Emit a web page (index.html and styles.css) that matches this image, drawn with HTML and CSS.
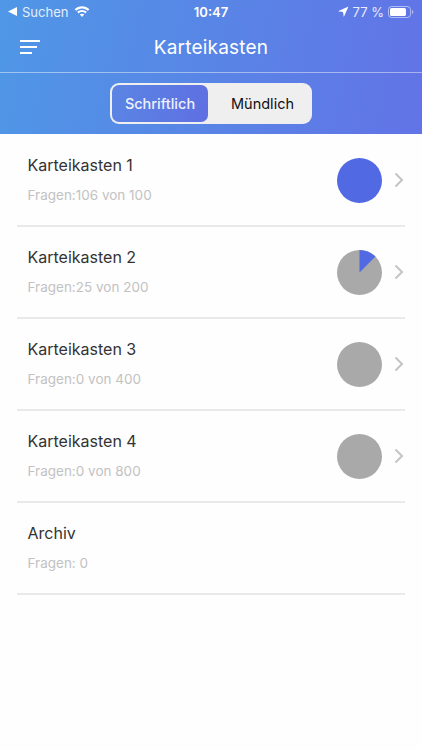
FILE: index.html
```html
<!DOCTYPE html>
<html lang="de">
<head>
<meta charset="utf-8">
<title>Karteikasten</title>
<link rel="stylesheet" href="styles.css">
</head>
<body>
<header class="header">
  <div class="status">
    <div class="status-left">
      <svg class="back-tri" viewBox="0 0 9 9"><path d="M0 4.500 9 0v9z"/></svg>
      <span>Suchen</span>
      <svg class="wifi" viewBox="0 0 16 12"><path d="M8 2.400c2.300 0 4.400.9 5.900 2.400l1.500-1.600C13.500 1.300 10.900.2 8 .2S2.500 1.300.6 3.200l1.500 1.600C3.600 3.300 5.700 2.400 8 2.400z"/><path d="M8 6.100c1.300 0 2.400.5 3.300 1.300l1.500-1.600C11.500 4.600 9.800 3.900 8 3.900s-3.500.7-4.800 1.900l1.500 1.600c.9-.8 2-1.300 3.300-1.300z"/><path d="M8 7.700c-.8 0-1.600.3-2.200.9L8 11l2.200-2.400c-.6-.6-1.400-.9-2.200-.9z"/></svg>
    </div>
    <div class="status-time">10:47</div>
    <div class="status-right">
      <svg class="loc" viewBox="0 0 11 11"><path d="M10.500.5 0 5.200l5 .7.800 5z"/></svg>
      <span>77 %</span>
      <svg class="battery" viewBox="0 0 26 12"><rect x=".5" y=".5" width="22" height="11" rx="3" fill="none" stroke="#fff" stroke-opacity=".5"/><rect x="2" y="2" width="16" height="8" rx="1.600" fill="#fff"/><path d="M24 4v4c.8-.3 1.300-1.100 1.300-2S24.800 4.300 24 4z" fill="#fff" fill-opacity=".5"/></svg>
    </div>
  </div>
  <nav class="nav">
    <svg class="menu" viewBox="0 0 20 14"><path d="M0 1h20M0 7h17M0 13h12" fill="none" stroke="#fff" stroke-width="2"/></svg>
    <h1 class="title">Karteikasten</h1>
  </nav>
  <div class="seg-wrap">
    <div class="seg">
      <div class="seg-btn seg-on">Schriftlich</div>
      <div class="seg-btn">Mündlich</div>
    </div>
  </div>
</header>
<main class="list">
  <div class="row">
    <div class="text"><div class="name">Karteikasten 1</div><div class="sub">Fragen:106 von 100</div></div>
    <svg class="pie" viewBox="0 0 46 46"><circle cx="23" cy="23" r="23" fill="#5169e3"/></svg>
    <svg class="chev" viewBox="0 0 10 16"><path d="M1.500 1.500 8 8l-6.500 6.500" fill="none" stroke="#c4c4c6" stroke-width="2"/></svg>
  </div>
  <div class="row">
    <div class="text"><div class="name">Karteikasten 2</div><div class="sub">Fragen:25 von 200</div></div>
    <svg class="pie" viewBox="0 0 46 46"><circle cx="23" cy="23" r="23" fill="#a9a9a9"/><path d="M23 23V0a23 23 0 0 1 16.300 6.700z" fill="#5169e3"/></svg>
    <svg class="chev" viewBox="0 0 10 16"><path d="M1.500 1.500 8 8l-6.500 6.500" fill="none" stroke="#c4c4c6" stroke-width="2"/></svg>
  </div>
  <div class="row">
    <div class="text"><div class="name">Karteikasten 3</div><div class="sub">Fragen:0 von 400</div></div>
    <svg class="pie" viewBox="0 0 46 46"><circle cx="23" cy="23" r="23" fill="#a9a9a9"/></svg>
    <svg class="chev" viewBox="0 0 10 16"><path d="M1.500 1.500 8 8l-6.500 6.500" fill="none" stroke="#c4c4c6" stroke-width="2"/></svg>
  </div>
  <div class="row">
    <div class="text"><div class="name">Karteikasten 4</div><div class="sub">Fragen:0 von 800</div></div>
    <svg class="pie" viewBox="0 0 46 46"><circle cx="23" cy="23" r="23" fill="#a9a9a9"/></svg>
    <svg class="chev" viewBox="0 0 10 16"><path d="M1.500 1.500 8 8l-6.500 6.500" fill="none" stroke="#c4c4c6" stroke-width="2"/></svg>
  </div>
  <div class="row">
    <div class="text"><div class="name">Archiv</div><div class="sub">Fragen: 0</div></div>
  </div>
</main>
</body>
</html>
```
FILE: styles.css
```css
* { box-sizing: border-box; }
html, body { margin: 0; height: 100%; }
body { width: 422px; height: 750px; overflow: hidden; background: #fefefe; font-family: Inter, "Liberation Sans", sans-serif; }
.header { height: 134px; background: linear-gradient(100deg, #4f97e6 0%, #6273e6 100%); color: #fff; display: flex; flex-direction: column; }
.status { height: 24px; display: flex; align-items: center; justify-content: space-between; padding: 0 8px 1px 8px; font-size: 13px; position: relative; }
.status-left { display: flex; align-items: center; gap: 5px; color: #e6eefb; }
.back-tri { width: 9px; height: 9px; fill: #fff; }
.wifi { width: 16px; height: 12px; fill: #fff; margin-left: 1px; }
.status-time { position: absolute; left: 0; right: 0; text-align: center; font-weight: 600; font-size: 13px; pointer-events: none; }
.status-right { display: flex; align-items: center; gap: 4px; color: #e6eefb; font-size: 13px; }
.loc { width: 11px; height: 11px; fill: #fff; }
.battery { width: 26px; height: 12px; }
.nav { height: 49px; border-bottom: 1px solid rgba(255,255,255,.45); display: flex; align-items: center; justify-content: center; position: relative; }
.menu { position: absolute; left: 20px; top: 16px; width: 20px; height: 14px; }
.title { margin: 0 0 1px; font-size: 19px; font-weight: 400; letter-spacing: .2px; }
.seg-wrap { flex: 1; display: flex; align-items: flex-start; justify-content: center; padding-top: 10px; }
.seg { width: 202px; height: 41px; background: #efefef; border-radius: 9px; display: flex; padding: 2px; }
.seg-btn { flex: 1; display: flex; align-items: center; justify-content: center; font-size: 14.5px; font-weight: 400; color: #111; padding-left: 7px; }
.seg-on { flex: 0 0 96px; padding-left: 0; font-weight: 500; color: #eef1fc; border-radius: 7px; background: linear-gradient(100deg, #5a85e4, #5f6fe2); }
.list { padding: 1px 17px 0; }
.row { height: 92px; border-bottom: 2px solid #e9e9e9; display: flex; align-items: center; padding-left: 10.500px; }
.text { flex: 1; padding-bottom: 2px; }
.name { font-size: 16px; line-height: 20px; color: #333; }
.sub { font-size: 13.5px; line-height: 18px; margin-top: 11px; color: #c2c2c2; }
.pie { width: 45px; height: 45px; }
.chev { width: 10px; height: 16px; margin: 0 1px 0 12px; }
```
